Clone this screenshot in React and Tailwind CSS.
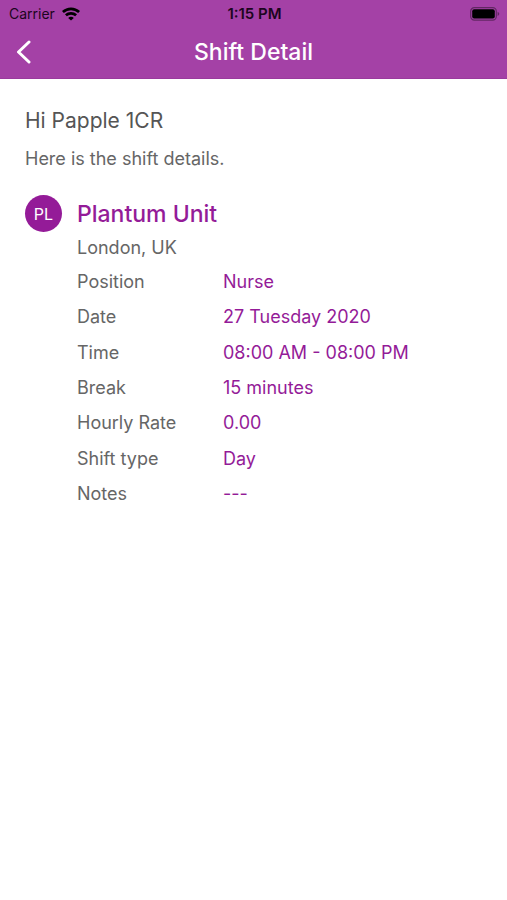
const details = [
  ["Position", "Nurse"],
  ["Date", "27 Tuesday 2020"],
  ["Time", "08:00 AM - 08:00 PM"],
  ["Break", "15 minutes"],
  ["Hourly Rate", "0.00"],
  ["Shift type", "Day"],
  ["Notes", "---"],
];

function WifiIcon() {
  return (
    <svg viewBox="0 0 18 14" className="h-[14px] w-[18px]" fill="none" stroke="#000" strokeWidth="2.7" aria-hidden="true">
      <path d="M.9 5C5.5.7 12.5.7 17.1 5" />
      <path d="M3.9 8.3c2.9-2.7 7.3-2.7 10.2 0" />
      <path d="M9 13.6 6.2 10.9c1.6-1.5 4-1.5 5.6 0z" fill="#000" stroke="none" />
    </svg>
  );
}

function BatteryIcon() {
  return (
    <svg viewBox="0 0 30 14" className="h-[14px] w-[30px]" aria-hidden="true">
      <rect x="0.7" y="0.7" width="25.6" height="12.4" rx="3.6" fill="none" stroke="#000" strokeOpacity="0.4" strokeWidth="1.2" />
      <rect x="2.2" y="2.2" width="22.6" height="9.4" rx="2" fill="#000" />
      <path d="M27.6 4.8c2.2.8 2.2 3.4 0 4.2z" fill="#000" fillOpacity="0.4" />
    </svg>
  );
}

export default function App() {
  return (
    <div className="min-h-screen bg-white font-['Inter','Liberation_Sans',sans-serif] text-[#666666]">
      <header className="border-b border-[#9a3a9d] bg-[#a441a6]">
        <div className="grid h-[27px] grid-cols-3 items-center pr-[7px] pl-[9px] text-sm text-[#1c0520]">
          <div className="flex items-center gap-[7px]">
            <span>Carrier</span>
            <WifiIcon />
          </div>
          <span className="text-center text-[15px] font-semibold">1:15 PM</span>
          <div className="flex justify-end">
            <BatteryIcon />
          </div>
        </div>
        <div className="grid h-[51px] grid-cols-[48px_1fr_48px] items-start">
          <button type="button" aria-label="Back" className="flex h-[50px] items-center pl-4">
            <svg viewBox="0 0 16 24" className="h-6 w-4" fill="none" stroke="#fff" strokeWidth="3" strokeLinecap="round" strokeLinejoin="round" aria-hidden="true">
              <path d="M13 2 2.5 12 13 22" />
            </svg>
          </button>
          <h1 className="text-center text-[23px] leading-[50px] font-medium text-white">Shift Detail</h1>
        </div>
      </header>
      <main className="px-[25px] pt-[26px]">
        <h2 className="text-[21px] leading-8 text-[#555555]">Hi Papple 1CR</h2>
        <p className="mt-[10px] text-lg leading-6">Here is the shift details.</p>
        <section className="mt-6 flex gap-[15px]">
          <div className="flex size-[37px] shrink-0 items-center justify-center rounded-full bg-[#941b98] text-base text-white">
            PL
          </div>
          <div className="min-w-0 flex-1">
            <h3 className="text-[23px] leading-[38px] font-medium text-[#941b98]">Plantum Unit</h3>
            <p className="text-lg leading-[30px]">London, UK</p>
            <dl className="mt-px grid min-h-[248px] auto-rows-fr text-lg leading-7">
              {details.map(([label, value]) => (
                <div key={label} className="grid grid-cols-[146px_1fr] items-center">
                  <dt>{label}</dt>
                  <dd className="text-[#941b98]">{value}</dd>
                </div>
              ))}
            </dl>
          </div>
        </section>
      </main>
    </div>
  );
}
